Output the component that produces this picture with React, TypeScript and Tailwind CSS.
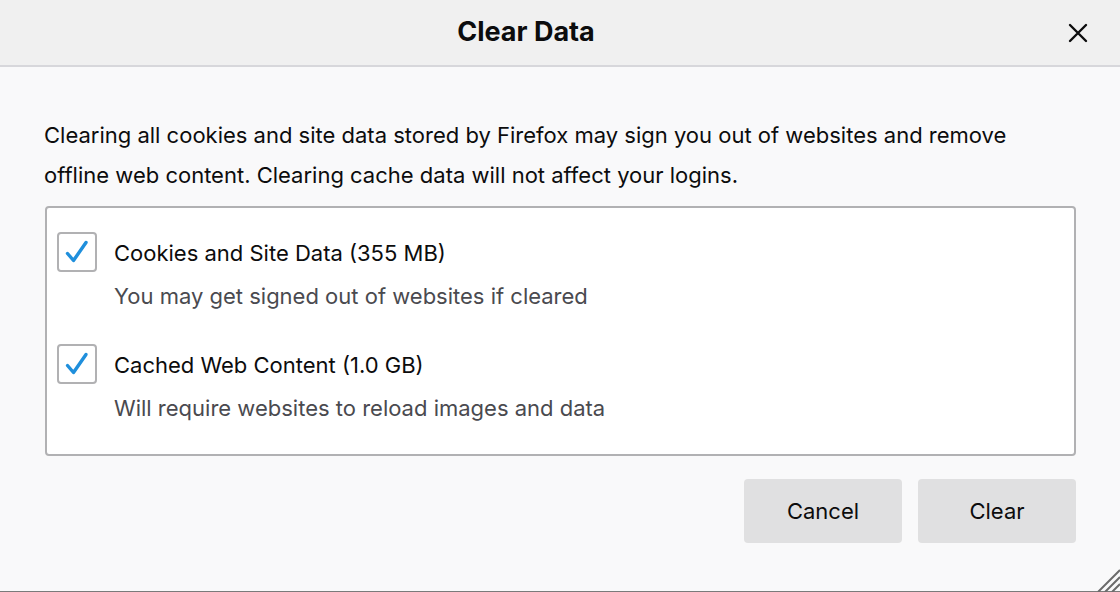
import React from "react";

const font = { fontFamily: "Inter, 'Noto Sans', sans-serif" };

const Check = () => (
  <div className="flex h-[40px] w-[40px] shrink-0 items-center justify-center rounded-[4px] border-2 border-[#b1b1b3] bg-white">
    <svg width="28" height="28" viewBox="0 0 28 28" fill="none">
      <path
        d="M4.5 15.5 L10.5 22.5 L23 4.5"
        stroke="#1f8fdc"
        strokeWidth="3.4"
        strokeLinecap="round"
        strokeLinejoin="round"
      />
    </svg>
  </div>
);

const Option = ({ label, hint }: { label: string; hint: string }) => (
  <div className="flex flex-col">
    <div className="flex h-[40px] items-center gap-[17px]">
      <Check />
      <span className="pt-[2px] text-[22px] text-[#0c0c0d]">{label}</span>
    </div>
    <p className="mt-[12px] pl-[57px] text-[22px] leading-[24px] text-[#4a4a4f]">
      {hint}
    </p>
  </div>
);

export default function App() {
  return (
    <div
      className="relative flex h-[592px] w-[1120px] flex-col overflow-hidden bg-[#f9f9fa]"
      style={font}
    >
      <header className="flex h-[67px] shrink-0 items-center border-b-2 border-[#d7d7db] bg-[#f0f0f0]">
        <h1 className="flex-1 text-center text-[27px] font-bold text-[#0c0c0d]">
          Clear Data
        </h1>
        <button className="flex w-[68px] items-center pl-[16px]" aria-label="Close">
          <svg width="20" height="20" viewBox="0 0 20 20">
            <path
              d="M2 2 L18 18 M18 2 L2 18"
              stroke="#0c0c0d"
              strokeWidth="2.4"
              strokeLinecap="round"
            />
          </svg>
        </button>
      </header>

      <main className="flex flex-col px-[44px] pt-[48px]">
        <p className="max-w-[1000px] text-[22px] leading-[40px] text-[#0c0c0d]">
          Clearing all cookies and site data stored by Firefox may sign you out of
          websites and remove offline web content. Clearing cache data will not
          affect your logins.
        </p>

        <section className="ml-px mt-[11px] flex w-[1031px] flex-col gap-[36px] rounded-[4px] border-2 border-[#b1b1b3] bg-white pb-[34px] pl-[10px] pt-[24px]">
          <Option
            label="Cookies and Site Data (355 MB)"
            hint="You may get signed out of websites if cleared"
          />
          <Option
            label="Cached Web Content (1.0 GB)"
            hint="Will require websites to reload images and data"
          />
        </section>

        <div className="mt-[23px] flex justify-end gap-[16px]">
          <button className="h-[64px] w-[158px] rounded-[4px] bg-[#e0e0e1] text-[22px] text-[#0c0c0d]">
            Cancel
          </button>
          <button className="h-[64px] w-[158px] rounded-[4px] bg-[#e0e0e1] text-[22px] text-[#0c0c0d]">
            Clear
          </button>
        </div>
      </main>

      <div className="absolute bottom-0 left-0 right-0 h-px bg-[#7a7a7a]" />
      <svg
        className="absolute bottom-0 right-0"
        width="24"
        height="24"
        viewBox="0 0 24 24"
      >
        <path
          d="M2 24 L24 2 M9 24 L24 9 M16 24 L24 16"
          stroke="#6b6b6b"
          strokeWidth="2"
        />
      </svg>
    </div>
  );
}
